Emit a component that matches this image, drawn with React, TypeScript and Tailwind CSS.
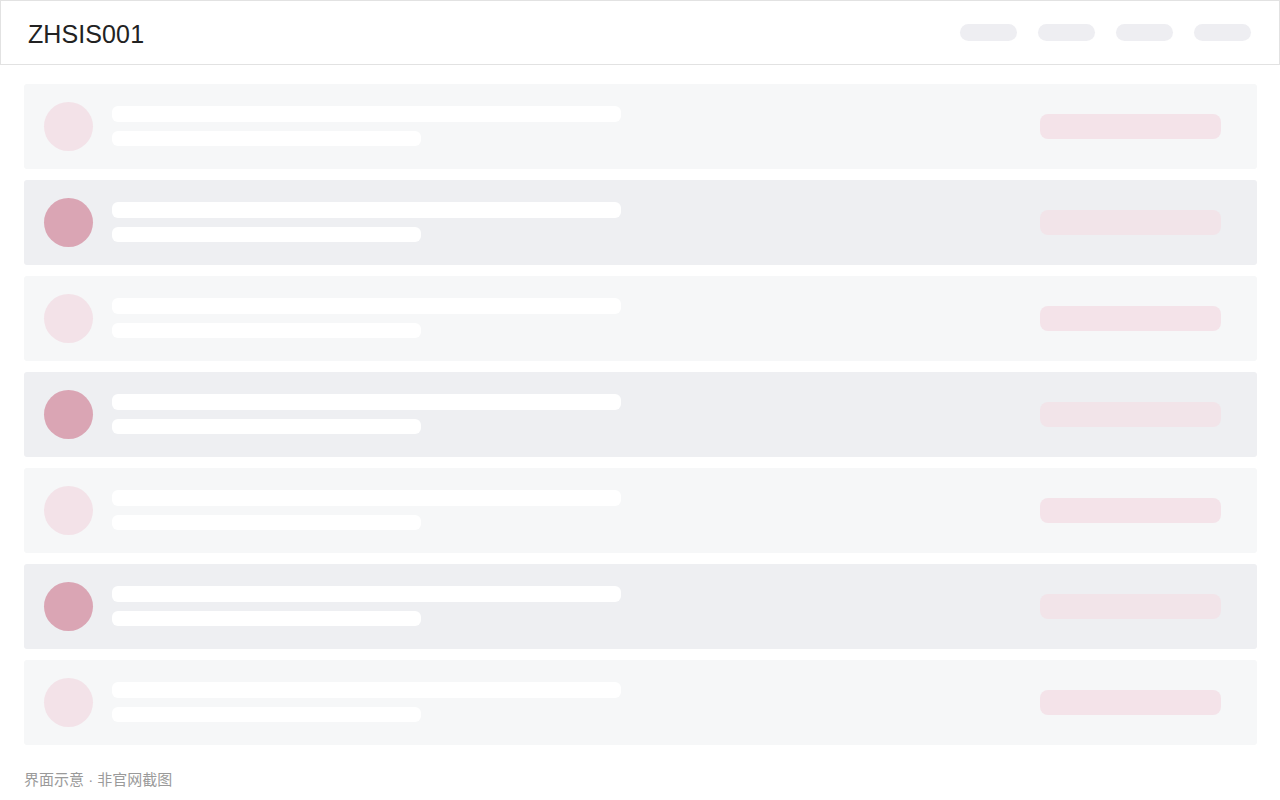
import React from 'react';

const rows = [0, 1, 2, 3, 4, 5, 6];

const App = () => {
  return (
    <div className="min-h-[800px] bg-white" style={{ fontFamily: '"Liberation Sans", "Noto Sans CJK SC", sans-serif' }}>
      {/* Header */}
      <header className="h-[65px] border border-[#e2e2e2] flex items-center justify-between pl-[27px] pr-[28px]">
        <h1 className="text-[25px] text-[#222] tracking-[0.1px] pt-[5px]">ZHSIS001</h1>
        <nav className="flex items-center gap-[21px]">
          <div className="w-[57px] h-[17px] rounded-full bg-[#eeeef2]" />
          <div className="w-[57px] h-[17px] rounded-full bg-[#eeeef2]" />
          <div className="w-[57px] h-[17px] rounded-full bg-[#eeeef2]" />
          <div className="w-[57px] h-[17px] rounded-full bg-[#eeeef2]" />
        </nav>
      </header>

      {/* List */}
      <main className="pt-[19px] pl-6 pr-[23px] flex flex-col gap-[11px]">
        {rows.map((i) => {
          const dark = i % 2 === 1;
          return (
            <div
              key={i}
              className={`h-[85px] rounded-[3px] flex items-center pl-5 pr-9 ${dark ? 'bg-[#eeeff2]' : 'bg-[#f6f7f8]'}`}
            >
              <div className={`w-[49px] h-[49px] rounded-full shrink-0 ${dark ? 'bg-[#daa5b4]' : 'bg-[#f3e2e8]'}`} />
              <div className="ml-[19px] flex flex-col gap-[9px] -mt-[1px]">
                <div className="w-[509px] h-4 rounded-md bg-white" />
                <div className="w-[309px] h-[15px] rounded-md bg-white" />
              </div>
              <div className={`ml-auto w-[181px] h-[25px] rounded-lg ${dark ? 'bg-[#f2e4e9]' : 'bg-[#f4e3e9]'}`} />
            </div>
          );
        })}
      </main>

      {/* Footer note */}
      <footer className="pl-6 pt-[24px] text-[15px] text-[#9a9a9a]">界面示意 · 非官网截图</footer>
    </div>
  );
};

export default App;
